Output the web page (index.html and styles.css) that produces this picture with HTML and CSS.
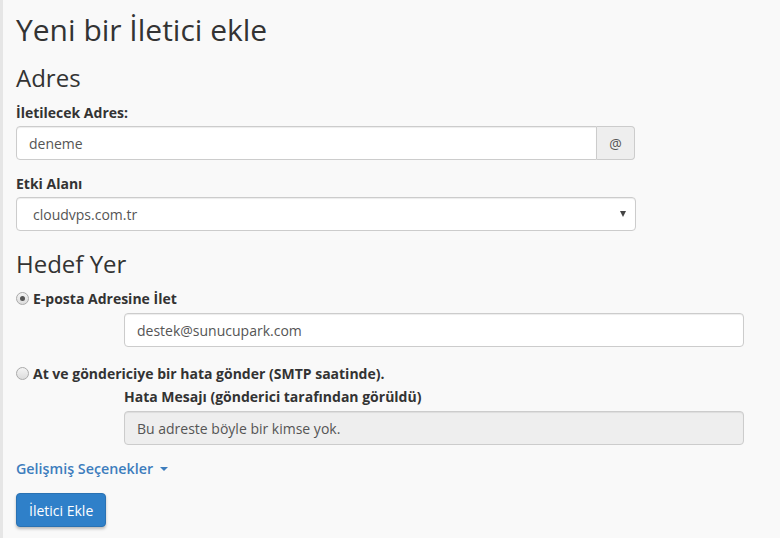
FILE: index.html
```html
<!DOCTYPE html>
<html lang="tr">
<head>
<meta charset="utf-8">
<link rel="stylesheet" href="styles.css">
</head>
<body>
<div class="page">
  <h1 class="title">Yeni bir İletici ekle</h1>
  <h2 class="section">Adres</h2>
  <div class="field">
    <label class="label">İletilecek Adres:</label>
    <div class="input-group">
      <div class="input grow">deneme</div>
      <div class="addon">@</div>
    </div>
  </div>
  <div class="field">
    <label class="label">Etki Alanı</label>
    <div class="input select">
      <span class="select-text">cloudvps.com.tr</span>
      <span class="caret-dark"></span>
    </div>
  </div>
  <h2 class="section section-2">Hedef Yer</h2>
  <div class="radio-row">
    <span class="radio checked"></span>
    <span class="radio-label">E-posta Adresine İlet</span>
  </div>
  <div class="indent">
    <div class="input">destek@sunucupark.com</div>
  </div>
  <div class="radio-row radio-row-2">
    <span class="radio"></span>
    <span class="radio-label">At ve göndericiye bir hata gönder (SMTP saatinde).</span>
  </div>
  <div class="indent">
    <label class="label">Hata Mesajı (gönderici tarafından görüldü)</label>
    <div class="input disabled">Bu adreste böyle bir kimse yok.</div>
  </div>
  <a class="advanced">Gelişmiş Seçenekler <span class="caret"></span></a>
  <div><button class="btn">İletici Ekle</button></div>
</div>
</body>
</html>
```
FILE: styles.css
```css
* { box-sizing: border-box; }
html, body { margin: 0; padding: 0; }
body {
  background: #f9f9f9;
  font-family: "Open Sans", "DejaVu Sans", sans-serif;
  font-size: 14px;
  color: #333;
  border-left: 3px solid #e6e6e6;
  min-height: 538px;
}
.page {
  padding: 12px 0 0 13px;
  width: 760px;
}
.title {
  font-size: 30px;
  font-weight: 400;
  line-height: 36px;
  margin: 0 0 16px;
}
.section {
  font-size: 24px;
  font-weight: 400;
  line-height: 28px;
  margin: 0 0 11px;
}
.section-2 { margin-top: 19px; margin-bottom: 10px; }
.field { margin-bottom: 14px; }
.label {
  display: block;
  font-weight: 700;
  line-height: 20px;
  margin-bottom: 3px;
}
.input-group { display: flex; width: 619px; }
.input {
  height: 34px;
  border: 1px solid #ccc;
  border-radius: 4px;
  background: #fff;
  color: #555;
  padding: 0 12px;
  display: flex;
  align-items: center;
  box-shadow: inset 0 1px 1px rgba(0,0,0,0.075);
}
.grow { flex: 1; border-radius: 4px 0 0 4px; }
.addon {
  width: 38px;
  height: 34px;
  border: 1px solid #ccc;
  border-left: 0;
  border-radius: 0 4px 4px 0;
  background: #eee;
  color: #555;
  display: flex;
  align-items: center;
  justify-content: center;
}
.select {
  width: 620px;
  justify-content: space-between;
  padding: 0 9px 0 16px;
}
.caret-dark {
  width: 0; height: 0;
  border-left: 3px solid transparent;
  border-right: 3px solid transparent;
  border-top: 6px solid #444;
}
.radio-row {
  display: flex;
  align-items: center;
  height: 20px;
  margin-bottom: 5px;
}
.radio-row-2 { margin-top: 16px; margin-bottom: 4px; }
.radio {
  width: 13px; height: 13px;
  border-radius: 50%;
  border: 1px solid #aaa;
  background: linear-gradient(#f4f4f4, #dcdcdc);
  margin-right: 4px;
  display: flex;
  align-items: center;
  justify-content: center;
}
.radio.checked::after {
  content: "";
  width: 5px; height: 5px;
  border-radius: 50%;
  background: #555;
}
.radio-label { font-weight: 700; }
.indent { padding-left: 108px; width: 728px; }
.indent .label { margin-bottom: 4px; }
.disabled { background: #eee; }
.advanced {
  display: inline-flex;
  align-items: center;
  margin-top: 14px;
  color: #3d7dbd;
  font-weight: 600;
  font-size: 14.3px;
  line-height: 20px;
}
.caret {
  display: inline-block;
  width: 0; height: 0;
  margin-left: 7px;
  border-left: 4px solid transparent;
  border-right: 4px solid transparent;
  border-top: 4px solid #3d7dbd;
}
.btn {
  margin-top: 14px;
  height: 34px;
  padding: 0 12px;
  background: #2f80c9;
  color: #fff;
  border: 1px solid #2a72b3;
  border-radius: 4px;
  font-family: "Open Sans", "DejaVu Sans", sans-serif;
  font-size: 14px;
  box-shadow: 0 2px 3px rgba(0,0,0,0.25);
}
```
